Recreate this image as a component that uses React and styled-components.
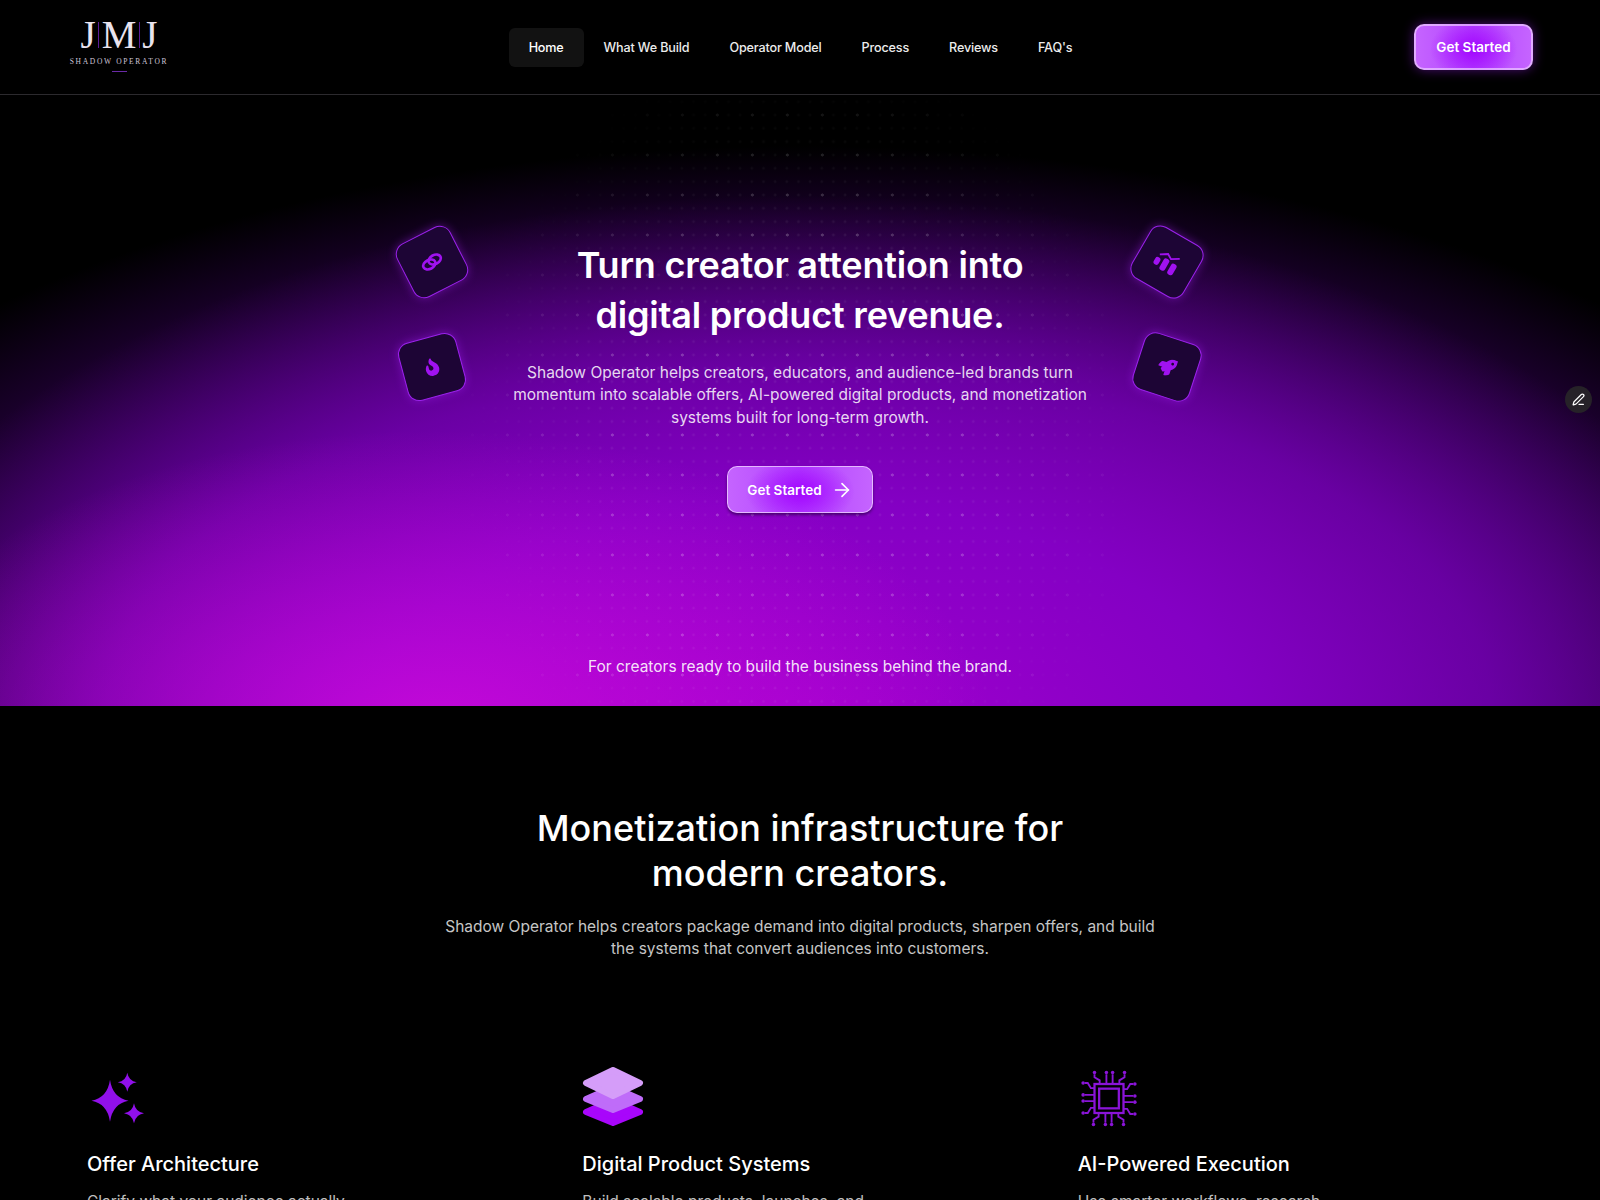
import React from "react";
import styled, { createGlobalStyle } from "styled-components";
import { ArrowRight, PenLine } from "lucide-react";
import { FaFire, FaRocket } from "react-icons/fa";

const NAV_ITEMS = ["Home", "What We Build", "Operator Model", "Process", "Reviews", "FAQ's"];

const star = (cx, cy, rx, ry) =>
  `M${cx} ${cy - ry}Q${cx + rx * 0.14} ${cy - ry * 0.14} ${cx + rx} ${cy}Q${cx + rx * 0.14} ${cy + ry * 0.14} ${cx} ${cy + ry}Q${cx - rx * 0.14} ${cy + ry * 0.14} ${cx - rx} ${cy}Q${cx - rx * 0.14} ${cy - ry * 0.14} ${cx} ${cy - ry}Z`;

const SparkleIcon = () => (
  <svg width="56" height="52" viewBox="0 0 56 52" fill="#9110ea">
    <path d={star(20, 28.7, 18.5, 21)} />
    <path d={star(37.3, 10.3, 9.5, 9.5)} />
    <path d={star(44, 41.3, 10, 10)} />
  </svg>
);

const LayersIcon = () => (
  <svg width="62" height="59" viewBox="0 0 62 59" strokeLinejoin="round" strokeWidth="6">
    <polygon points="4,45 31,33 58,45 31,56" fill="#a806fb" stroke="#a806fb" />
    <polygon points="4,32 31,20 58,32 31,43" fill="#bf6cf9" stroke="#bf6cf9" />
    <polygon points="4,16 31,3 58,16 31,29" fill="#d59df9" stroke="#d59df9" />
  </svg>
);

const ChipIcon = () => (
  <svg width="58" height="57" viewBox="0 0 56 55" fill="none" stroke="#8a14d8" strokeWidth="1.8">
    <rect x="14" y="13.5" width="28" height="28" strokeWidth="2.2" />
    <rect x="18.5" y="18" width="19" height="19" strokeWidth="2.2" />
    {[0, 90, 180, 270].map((r) => (
      <g key={r} transform={`rotate(${r} 28 27.5)`}>
        <path d="M14 4v3l5 3v3.500M25.500 4v9.500M31.500 4v9.500M43 4v3l-5 3v3.500" />
        <circle cx="14" cy="2.500" r="1.700" fill="#8a14d8" stroke="none" />
        <circle cx="25.500" cy="2.500" r="1.700" fill="#8a14d8" stroke="none" />
        <circle cx="31.500" cy="2.500" r="1.700" fill="#8a14d8" stroke="none" />
        <circle cx="43" cy="2.500" r="1.700" fill="#8a14d8" stroke="none" />
      </g>
    ))}
  </svg>
);

const LinkRings = () => (
  <svg width="24" height="24" viewBox="0 0 24 24" fill="none" stroke="#a012f0" strokeWidth="2.6">
    <ellipse cx="8.500" cy="13" rx="6.500" ry="4.500" />
    <ellipse cx="15.500" cy="11" rx="6.500" ry="4.500" />
  </svg>
);

const BarsLine = () => (
  <svg width="26" height="24" viewBox="0 0 26 24" fill="#a012f0">
    <rect x="1" y="12" width="5.500" height="8" rx="2.500" />
    <rect x="9" y="9" width="6" height="13" rx="2.500" />
    <rect x="18" y="10" width="6" height="12" rx="2.500" />
    <path d="M3 9l7-4.500 5 3L22.500 3" fill="none" stroke="#a012f0" strokeWidth="1.800" />
  </svg>
);

const FLOATERS = [
  { x: 432, y: 262, r: -27, icon: <LinkRings /> },
  { x: 432, y: 367, r: -15, icon: <FaFire size={18} color="#a012f0" /> },
  { x: 1167, y: 262, r: 30, icon: <BarsLine /> },
  { x: 1167, y: 367, r: 18, icon: <FaRocket size={18} color="#a012f0" /> },
];

const CARDS = [
  {
    title: "Offer Architecture",
    text: "Clarify what your audience actually",
    icon: <SparkleIcon />,
    ox: 3,
    oy: 5,
  },
  {
    title: "Digital Product Systems",
    text: "Build scalable products, launches, and",
    icon: <LayersIcon />,
    ox: 0,
    oy: 0,
  },
  {
    title: "AI-Powered Execution",
    text: "Use smarter workflows, research",
    icon: <ChipIcon />,
    ox: 2,
    oy: 3,
  },
];

const App = () => {
  return (
    <Page>
      <GlobalStyle />
      <Header>
        <Logo>
          <LogoMark>
            <span>J</span>
            <LogoBar />
            <span>M</span>
            <LogoBar />
            <span>J</span>
          </LogoMark>
          <LogoText>SHADOW OPERATOR</LogoText>
          <LogoRule />
        </Logo>
        <Nav>
          {NAV_ITEMS.map((item) => (
            <NavLink key={item} $active={item === "Home"}>
              {item}
            </NavLink>
          ))}
        </Nav>
        <HeaderButton>Get Started</HeaderButton>
      </Header>

      <Hero>
        {FLOATERS.map((f) => (
          <Floater key={f.x + "-" + f.y} style={{ left: f.x - 30, top: f.y - 125, transform: `rotate(${f.r}deg)` }}>
            {f.icon}
          </Floater>
        ))}
        <HeroTitle>
          Turn creator attention into
          <br />
          digital product revenue.
        </HeroTitle>
        <HeroText>
          Shadow Operator helps creators, educators, and audience-led brands turn
          <br />
          momentum into scalable offers, AI-powered digital products, and monetization
          <br />
          systems built for long-term growth.
        </HeroText>
        <HeroButton>
          Get Started
          <ArrowRight size={22} strokeWidth={1.8} />
        </HeroButton>
        <HeroNote>For creators ready to build the business behind the brand.</HeroNote>
        <EditButton>
          <PenLine size={13} strokeWidth={2.2} />
        </EditButton>
      </Hero>

      <Intro>
        <IntroTitle>
          Monetization infrastructure for
          <br />
          modern creators.
        </IntroTitle>
        <IntroText>
          Shadow Operator helps creators package demand into digital products, sharpen offers, and build
          <br />
          the systems that convert audiences into customers.
        </IntroText>
      </Intro>

      <Cards>
        {CARDS.map((card) => (
          <Card key={card.title}>
            <IconSlot $x={card.ox} $y={card.oy}>
              {card.icon}
            </IconSlot>
            <CardTitle>{card.title}</CardTitle>
            <CardText>{card.text}</CardText>
          </Card>
        ))}
      </Cards>
    </Page>
  );
};

const GlobalStyle = createGlobalStyle`
  html, body {
    margin: 0;
    background: #000;
    overflow: hidden;
  }
  * {
    box-sizing: border-box;
  }
`;

const Page = styled.div`
  height: 1200px;
  overflow: hidden;
  background: #000;
  color: #fff;
  font-family: Inter, "Noto Sans", sans-serif;
`;

const Header = styled.header`
  height: 95px;
  border-bottom: 1px solid #2c2a2e;
  display: grid;
  grid-template-columns: 1fr auto 1fr;
  align-items: center;
  padding: 0 67px 0 68px;
`;

const Logo = styled.div`
  width: 102px;
  display: flex;
  flex-direction: column;
  align-items: center;
  color: #e9e3ee;
  font-family: "Liberation Serif", serif;
`;

const LogoMark = styled.div`
  display: flex;
  align-items: flex-start;
  gap: 2.500px;
  font-size: 39px;
  line-height: 34px;
  height: 34px;
  margin-top: -5px;
`;

const LogoBar = styled.i`
  width: 1px;
  height: 26px;
  margin-top: 4px;
  background: #5b1c96;
`;

const LogoText = styled.div`
  font-size: 7.500px;
  letter-spacing: 1.680px;
  line-height: 10px;
  margin-top: 5px;
  white-space: nowrap;
  color: #cfc6d8;
`;

const LogoRule = styled.div`
  width: 15px;
  height: 1px;
  margin-top: 4px;
  background: #6a2aa6;
`;

const Nav = styled.nav`
  display: flex;
  align-items: center;
`;

const NavLink = styled.a`
  height: 39px;
  padding: 0 20px;
  display: flex;
  align-items: center;
  border-radius: 6px;
  font-size: 12.600px;
  font-weight: 500;
  letter-spacing: -0.150px;
  white-space: nowrap;
  color: ${(p) => (p.$active ? "#fff" : "#ececec")};
  background: ${(p) => (p.$active ? "#121212" : "transparent")};
`;

const GradientButton = styled.button`
  display: flex;
  align-items: center;
  justify-content: center;
  border: 2px solid rgba(236, 200, 255, 0.72);
  border-radius: 10px;
  color: #fff;
  font-family: inherit;
  font-weight: 600;
  font-size: 13.500px;
  background: radial-gradient(ellipse 38% 75% at 50% 55%, #a204ff 0%, rgba(162, 4, 255, 0) 100%),
    linear-gradient(90deg, #c564ff, #b344ff 50%, #c564ff);
`;

const HeaderButton = styled(GradientButton)`
  justify-self: end;
  width: 119px;
  height: 46px;
  box-shadow: 0 0 12px rgba(165, 30, 255, 0.45);
`;

const Hero = styled.section`
  position: relative;
  height: 611px;
  padding-top: 145px;
  display: flex;
  flex-direction: column;
  align-items: center;
  text-align: center;
  background: radial-gradient(ellipse 560px 300px at 27% 104%, rgba(206, 10, 220, 0.85), rgba(206, 10, 220, 0) 100%),
    radial-gradient(ellipse 1000px 560px at 50% 108%, #a300cf 0%, #8400c4 45%, rgba(110, 0, 175, 0) 100%),
    radial-gradient(ellipse 1150px 560px at 50% 100%, #70009e 0%, #4a007c 60%, #000 100%),
    #000;

  &::before {
    content: "";
    position: absolute;
    inset: 0;
    pointer-events: none;
    background-image: radial-gradient(circle, rgba(255, 255, 255, 0.17) 1.300px, transparent 1.800px),
      radial-gradient(circle, rgba(255, 255, 255, 0.06) 1.200px, transparent 1.700px);
    background-size: 35px 40px, 11.670px 13.330px;
    -webkit-mask-image: radial-gradient(ellipse 340px 420px at 50% 60%, #000 55%, transparent 100%);
    mask-image: radial-gradient(ellipse 340px 420px at 50% 60%, #000 55%, transparent 100%);
  }

  & > * {
    position: relative;
  }
`;

const Floater = styled.div`
  && {
    position: absolute;
  }
  width: 60px;
  height: 60px;
  display: flex;
  align-items: center;
  justify-content: center;
  border: 1.500px solid #9a22ea;
  border-radius: 12px;
  background: #1d0535;
  box-shadow: 0 0 10px rgba(160, 30, 240, 0.45);
`;

const HeroTitle = styled.h1`
  margin: 0;
  font-size: 36px;
  line-height: 50px;
  font-weight: 600;
  letter-spacing: -0.200px;
`;

const HeroText = styled.p`
  margin: 22px 0 0;
  font-size: 15.500px;
  line-height: 22.400px;
  color: rgba(255, 255, 255, 0.85);
`;

const HeroButton = styled(GradientButton)`
  margin-top: 37px;
  width: 146px;
  height: 47px;
  gap: 9px;
  border: 1.500px solid rgba(240, 215, 255, 0.75);
  box-shadow: 0 2px 3px rgba(40, 0, 70, 0.65);
`;

const HeroNote = styled.p`
  margin: auto 0 28px;
  font-size: 15.500px;
  line-height: 22px;
  color: rgba(255, 255, 255, 0.9);
`;

const EditButton = styled.div`
  && {
    position: absolute;
  }
  right: 8px;
  top: 291px;
  width: 27px;
  height: 27px;
  border-radius: 50%;
  display: flex;
  align-items: center;
  justify-content: center;
  background: #262228;
  color: #fff;
`;

const Intro = styled.section`
  padding-top: 100px;
  text-align: center;
`;

const IntroTitle = styled.h2`
  margin: 0;
  font-size: 36px;
  line-height: 45px;
  font-weight: 500;
`;

const IntroText = styled.p`
  margin: 20px 0 0;
  font-size: 15.500px;
  line-height: 22.400px;
  color: rgba(255, 255, 255, 0.78);
`;

const Cards = styled.section`
  margin-top: 106px;
  padding: 0 87px;
  display: grid;
  grid-template-columns: repeat(3, 1fr);
  gap: 60px;
`;

const Card = styled.article`
  display: flex;
  flex-direction: column;
  align-items: flex-start;
`;

const IconSlot = styled.div`
  height: 60px;
  padding: ${(p) => p.$y}px 0 0 ${(p) => p.$x}px;
  svg {
    display: block;
  }
`;

const CardTitle = styled.h3`
  margin: 23px 0 0;
  font-size: 20px;
  line-height: 28px;
  font-weight: 500;
`;

const CardText = styled.p`
  margin: 13px 0 0;
  font-size: 15.500px;
  line-height: 22.400px;
  color: rgba(255, 255, 255, 0.75);
`;

export default App;
